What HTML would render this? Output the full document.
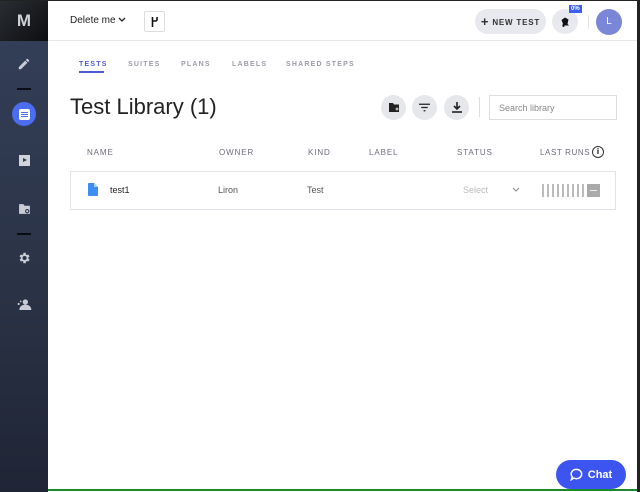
<!DOCTYPE html>
<html><head><meta charset="utf-8"><style>
*{box-sizing:border-box;margin:0;padding:0}
body{width:640px;height:491px;overflow:hidden;font-family:"Liberation Sans",sans-serif;background:#fff;position:relative;border-top:1px solid #222;}
.side{position:absolute;left:0;top:0;width:48px;height:491px;background:linear-gradient(180deg,#34405a,#2a3245 60%,#1f2535);}
.logo{height:40px;background:linear-gradient(135deg,#2a2d33,#0d0e10);display:flex;align-items:center;justify-content:center;color:#cfd2d8;font-weight:bold;font-size:17px;}
.ic{position:absolute;left:0;width:48px;display:flex;justify-content:center}
.dash{position:absolute;left:17px;width:14px;height:2px;background:#0b0d12}
.top{position:absolute;left:48px;top:0;right:0;height:40px;border-bottom:1px solid #e6e6ea}
.right{position:absolute;right:0;top:0;width:3px;height:491px;background:#222}
.btn{position:absolute;background:#e8e9ee;border-radius:14px}
.tabs{position:absolute;top:60px;left:79px;font-size:7px;letter-spacing:1.2px;color:#9a9ca6;font-weight:bold}
.tabs span{position:absolute;white-space:nowrap}
.hdr{position:absolute;top:147px;font-size:8px;letter-spacing:.9px;color:#6b6e78}
.row{position:absolute;left:70px;top:170px;width:546px;height:39px;border:1px solid #e2e3e8;}
.cell{position:absolute;top:184px;font-size:9px;color:#555}
.circ{position:absolute;top:94px;width:25px;height:25px;border-radius:50%;background:#e6e7eb;display:flex;align-items:center;justify-content:center}
</style></head><body>
<div class="side">
 <div class="logo">M</div>
 <div class="ic" style="top:56px"><svg width="14" height="14" viewBox="0 0 24 24"><path d="M3 17.25V21h3.75L17.8 9.94l-3.75-3.75L3 17.25zM20.7 7.04a1 1 0 0 0 0-1.41l-2.34-2.34a1 1 0 0 0-1.410 0l-1.83 1.83 3.75 3.75 1.83-1.83z" fill="#c9ccd4"/></svg></div>
 <div class="dash" style="top:87px"></div>
 <div class="ic" style="top:101px"><div style="width:24px;height:24px;border-radius:50%;background:#4b6df0;display:flex;align-items:center;justify-content:center"><div style="width:11px;height:11px;background:#fff;border-radius:2px;padding:2px"><div style="height:1px;background:#4b6df0;margin:1px 0"></div><div style="height:1px;background:#4b6df0;margin:1px 0"></div><div style="height:1px;background:#4b6df0;margin:1px 0"></div></div></div></div>
 <div class="ic" style="top:154px"><div style="width:11px;height:11px;background:#d0d3da;position:relative"><div style="position:absolute;left:4px;top:3px;border-left:4px solid #2f3a4f;border-top:2.5px solid transparent;border-bottom:2.5px solid transparent"></div></div></div>
 <div class="ic" style="top:202px"><svg width="13" height="12" viewBox="0 0 24 22"><path d="M2 2h8l2 3h10v15H2z" fill="#c9ccd4"/><circle cx="17" cy="15" r="4" fill="#2f3a4f"/><circle cx="17" cy="15" r="2" fill="#c9ccd4"/></svg></div>
 <div class="dash" style="top:232px"></div>
 <div class="ic" style="top:250px"><svg width="14" height="14" viewBox="0 0 24 24"><path fill="#c9ccd4" d="M19.4 13a7.5 7.5 0 0 0 0-2l2.1-1.6-2-3.5-2.5 1a7 7 0 0 0-1.7-1L15 3h-4l-.4 2.9a7 7 0 0 0-1.7 1l-2.5-1-2 3.5L6.6 11a7.5 7.5 0 0 0 0 2l-2.1 1.6 2 3.5 2.5-1a7 7 0 0 0 1.7 1L11 21h4l.4-2.9a7 7 0 0 0 1.7-1l2.5 1 2-3.5zM13 15.5a3.5 3.5 0 1 1 0-7 3.5 3.5 0 0 1 0 7z"/></svg></div>
 <div class="ic" style="top:297px"><svg width="16" height="12" viewBox="0 0 24 18"><circle cx="14" cy="6" r="4" fill="#c9ccd4"/><path d="M5 18c0-5 4-8 9-8s9 3 9 8z" fill="#c9ccd4"/><circle cx="4" cy="9" r="1.6" fill="#c9ccd4"/><circle cx="7" cy="5" r="1.3" fill="#c9ccd4"/></svg></div>
</div>
<div class="top">
 <div style="position:absolute;left:22px;top:14px;font-size:10px;color:#222">Delete me</div>
 <svg style="position:absolute;left:70px;top:16px" width="8" height="6" viewBox="0 0 8 6"><path d="M1 1l3 3 3-3" stroke="#222" stroke-width="1.3" fill="none"/></svg>
 <div style="position:absolute;left:96px;top:10px;width:21px;height:21px;border:1px solid #ddd;border-radius:2px"><svg style="position:absolute;left:6px;top:5px" width="8" height="10" viewBox="0 0 8 10"><path d="M1.5 0v10M1.5 4h3a1.5 1.5 0 0 0 1.5-1.5V0" stroke="#111" stroke-width="1.6" fill="none"/></svg></div>
 <div class="btn" style="left:427px;top:8px;width:71px;height:25px;font-size:8px;font-weight:bold;letter-spacing:.8px;color:#333;line-height:25px;text-align:center"><span style="font-size:13px;vertical-align:-1px">+</span> NEW TEST</div>
 <div class="btn" style="left:504px;top:8px;width:26px;height:25px;border-radius:50%;display:flex;align-items:center;justify-content:center"><svg width="12" height="12" viewBox="0 0 24 24"><path d="M12 3l7 4-2 9 3 3H6l2-3-3-8z" fill="#111"/><circle cx="9" cy="20" r="2" fill="#111"/></svg></div>
 <div style="position:absolute;left:521px;top:4px;background:#3b5ff0;color:#fff;font-size:6px;font-weight:bold;padding:0 2px;line-height:8px">0%</div>
 <div style="position:absolute;left:540px;top:14px;width:1px;height:14px;background:#e5e5e5"></div>
</div>
<div style="position:absolute;left:596px;top:8px;width:26px;height:26px;border-radius:50%;background:#7a87d6;color:#fff;font-size:10px;text-align:center;line-height:26px">L</div>
<div class="tabs">
 <span style="left:0;color:#4b5bd6">TESTS</span><div style="position:absolute;left:0;top:10px;width:25px;height:1.5px;background:#4b5bd6"></div>
 <span style="left:49px">SUITES</span><span style="left:102px">PLANS</span><span style="left:153px">LABELS</span><span style="left:207px">SHARED STEPS</span>
</div>
<div style="position:absolute;left:70px;top:93px;font-size:22px;color:#222">Test Library (1)</div>
<div class="circ" style="left:381px"><svg width="12" height="11" viewBox="0 0 24 22"><path d="M2 2h8l2 3h10v15H2z" fill="#222"/><path d="M15 14h6M18 11v6" stroke="#e6e7eb" stroke-width="2"/></svg></div>
<div class="circ" style="left:412px"><svg width="11" height="9" viewBox="0 0 12 9"><path d="M0 1h12M2.5 4.5h7M5 8h2" stroke="#222" stroke-width="1.4"/></svg></div>
<div class="circ" style="left:444px"><svg width="10" height="11" viewBox="0 0 10 11"><path d="M5 0v6M2 4l3 3 3-3" stroke="#222" stroke-width="1.6" fill="none"/><path d="M0 10h10" stroke="#222" stroke-width="1.6"/></svg></div>
<div style="position:absolute;left:479px;top:96px;width:1px;height:20px;background:#ddd"></div>
<div style="position:absolute;left:489px;top:94px;width:128px;height:25px;border:1px solid #ddd;font-size:9px;color:#888;padding:7px 9px">Search library</div>
<div class="hdr" style="left:87px">NAME</div><div class="hdr" style="left:219px">OWNER</div><div class="hdr" style="left:308px">KIND</div><div class="hdr" style="left:369px">LABEL</div><div class="hdr" style="left:457px">STATUS</div><div class="hdr" style="left:540px;letter-spacing:.6px">LAST RUNS</div>
<div style="position:absolute;left:592px;top:145px;width:12px;height:12px;border:1.3px solid #333;border-radius:50%;font-size:8px;text-align:center;line-height:10px;font-weight:bold">i</div>
<div class="row"></div>
<svg style="position:absolute;left:88px;top:182px" width="10" height="13" viewBox="0 0 10 13"><path d="M1 0h5l4 4v8a1 1 0 0 1-1 1H1a1 1 0 0 1-1-1V1a1 1 0 0 1 1-1z" fill="#3d8ef0"/><path d="M6 0v4h4" fill="#a8ccf8"/></svg>
<div class="cell" style="left:110px;color:#222">test1</div><div class="cell" style="left:218px">Liron</div><div class="cell" style="left:307px">Test</div><div class="cell" style="left:463px;color:#bbb">Select</div>
<svg style="position:absolute;left:512px;top:186px" width="8" height="5" viewBox="0 0 8 5"><path d="M1 1l3 3 3-3" stroke="#888" stroke-width="1" fill="none"/></svg>
<div style="position:absolute;left:542px;top:183px;display:flex;gap:3px">
 <i style="width:2px;height:13px;background:#bbb"></i><i style="width:2px;height:13px;background:#bbb"></i><i style="width:2px;height:13px;background:#bbb"></i><i style="width:2px;height:13px;background:#bbb"></i><i style="width:2px;height:13px;background:#bbb"></i><i style="width:2px;height:13px;background:#bbb"></i><i style="width:2px;height:13px;background:#bbb"></i><i style="width:2px;height:13px;background:#bbb"></i><i style="width:2px;height:13px;background:#bbb"></i>
 <i style="width:13px;height:13px;background:#aaa;display:block;position:relative"><b style="position:absolute;left:3px;top:6px;width:7px;height:1px;background:#eee"></b></i>
</div>
<div style="position:absolute;left:556px;top:459px;width:70px;height:29px;border-radius:15px;background:#3d55f0;color:#fff;font-weight:bold;font-size:11px;display:flex;align-items:center;justify-content:center;gap:5px"><svg width="13" height="13" viewBox="0 0 14 14"><path d="M7 1.5a5.5 5 0 1 1-2.8 9.3L1.5 12.5l.9-3A5.5 5 0 0 1 7 1.5z" fill="none" stroke="#fff" stroke-width="1.6"/></svg>Chat</div>
<div style="position:absolute;left:48px;bottom:0;width:592px;height:2px;background:#1a8c2a"></div>
<div class="right"></div>
</body></html>
